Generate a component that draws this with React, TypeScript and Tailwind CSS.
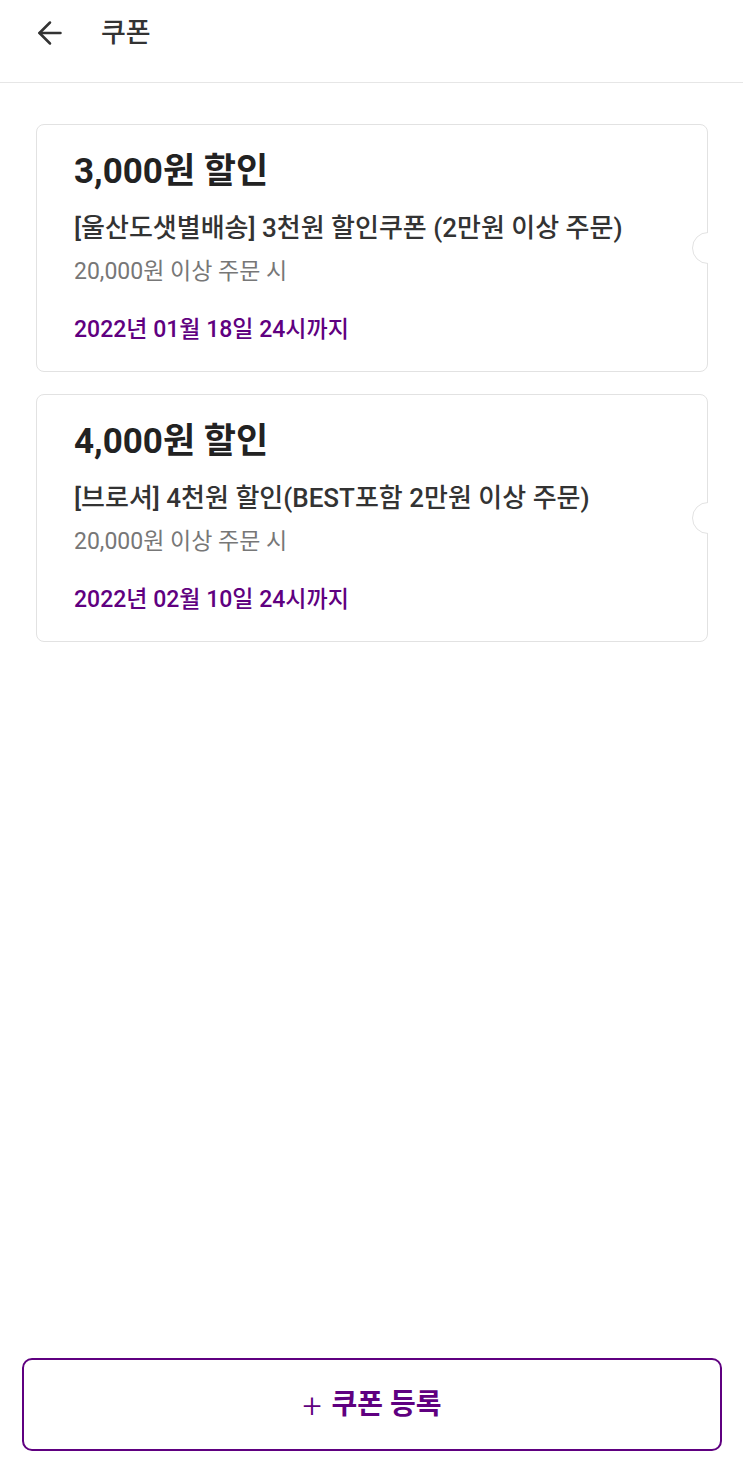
import { ArrowLeft } from "lucide-react";

const coupons = [
  {
    amount: "3,000원 할인",
    name: "[울산도샛별배송] 3천원 할인쿠폰 (2만원 이상 주문)",
    condition: "20,000원 이상 주문 시",
    until: "2022년 01월 18일 24시까지",
  },
  {
    amount: "4,000원 할인",
    name: "[브로셔] 4천원 할인(BEST포함 2만원 이상 주문)",
    condition: "20,000원 이상 주문 시",
    until: "2022년 02월 10일 24시까지",
  },
];

function CouponCard({ c }: { c: (typeof coupons)[number] }) {
  return (
    <div className="relative h-[248px] rounded-lg border border-[#e2e2e2] bg-white pl-[37px] pt-[27px]">
      <p className="text-[35px] font-bold leading-[40px] text-[#222]">{c.amount}</p>
      <p className="mt-[19px] whitespace-nowrap text-[26px] font-medium leading-[34px] text-[#333]">{c.name}</p>
      <p className="mt-[12px] text-[23px] leading-[30px] text-[#777]">{c.condition}</p>
      <p className="mt-[28px] text-[23px] font-medium leading-[30px] text-[#5f0080]">{c.until}</p>

      {/* ticket notch on the right edge */}
      <div className="absolute right-[-1px] top-1/2 h-[32px] w-[16px] -translate-y-1/2 overflow-hidden">
        <div className="h-[32px] w-[32px] rounded-full border border-[#e2e2e2] bg-white" />
      </div>
    </div>
  );
}

export default function App() {
  return (
    <div
      className="flex h-[1470px] w-[743px] flex-col bg-white"
      style={{ fontFamily: 'Roboto, "Noto Sans CJK KR", "Noto Sans", sans-serif' }}
    >
      <header className="flex h-[83px] items-center border-b border-[#e6e6e6] pb-[16px]">
        <ArrowLeft className="ml-[32px] h-[36px] w-[36px] text-[#333]" strokeWidth={1.7} />
        <h1 className="ml-[33px] text-[27px] font-medium text-[#333]">쿠폰</h1>
      </header>

      <div className="flex flex-col gap-[22px] px-[36px] pt-[41px] pr-[35px]">
        {coupons.map((c) => (
          <CouponCard key={c.amount} c={c} />
        ))}
      </div>

      <div className="mt-auto px-[22px] pb-[19px] pr-[21px]">
        <button className="flex h-[93px] w-full items-center justify-center gap-[10px] rounded-[10px] border-2 border-[#5f0080] text-[28px] font-bold text-[#5f0080]">
          <span className="text-[34px] font-light leading-none">+</span>
          <span>쿠폰 등록</span>
        </button>
      </div>
    </div>
  );
}
